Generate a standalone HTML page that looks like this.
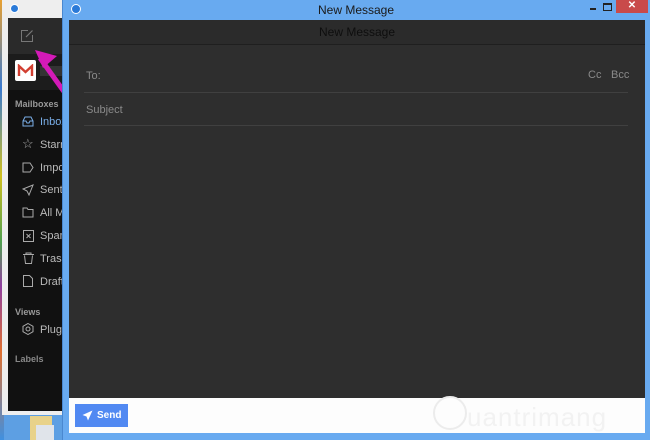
<!DOCTYPE html>
<html><head><meta charset="utf-8"><style>
*{margin:0;padding:0;box-sizing:border-box}
body{width:650px;height:440px;overflow:hidden;position:relative;background:#5d9fe3;font-family:"Liberation Sans",sans-serif}
.abs{position:absolute}
</style></head><body>
<div class="abs" style="left:0;top:0;width:4px;height:440px;background:linear-gradient(#e8a030 0,#3a7ad0 20%,#d0c020 40%,#50a050 55%,#9040a0 65%,#e07030 80%,#4090e0 100%)"></div>
<div class="abs" style="left:2px;top:0;width:64px;height:415px;background:#eeeeee"></div>
<div class="abs" style="left:10px;top:4px;width:9px;height:9px;border-radius:50%;background:#2a7ad8;border:1px solid #fff"></div>
<div class="abs" style="left:8px;top:18px;width:56px;height:393px;background:#111"></div>
<div class="abs" style="left:8px;top:18px;width:56px;height:36px;background:#2a2a2a"></div>
<svg class="abs" style="left:20px;top:29px" width="14" height="14" viewBox="0 0 14 14"><path d="M8 1.5H1.5v11h11V6" fill="none" stroke="#777" stroke-width="1"/><path d="M6 8l6.5-6.5" stroke="#777" stroke-width="1.2"/></svg>
<div class="abs" style="left:8px;top:54px;width:56px;height:36px;background:#1c1c1c"></div>
<div class="abs" style="left:15px;top:60px;width:21px;height:21px;background:#fff;border-radius:2px"></div>
<svg class="abs" style="left:17px;top:64px" width="17" height="13" viewBox="0 0 17 13"><path d="M2 12V2l6.5 6L15 2v10" fill="none" stroke="#d23f31" stroke-width="2.4"/></svg>
<div class="abs" style="left:40px;top:66px;width:24px;height:10px;background:#333"></div>
<div class="abs" style="left:15px;top:99px;font-size:9px;font-weight:bold;color:#999">Mailboxes</div>
<div class="abs" style="left:40px;top:116px;font-size:11px;color:#7aaee8">Inbox</div>
<svg class="abs" style="left:22px;top:116px" width="12" height="11"><path d="M1 5l2-4h6l2 4v5H1z M1 5h3l1 2h2l1-2h3" fill="none" stroke="#7aaee8"/></svg>
<div class="abs" style="left:40px;top:139px;font-size:11px;color:#bbb">Starr</div>
<div class="abs" style="left:22px;top:136px;font-size:13px;color:#aaa">☆</div>
<div class="abs" style="left:40px;top:162px;font-size:11px;color:#bbb">Impo</div>
<svg class="abs" style="left:22px;top:162px" width="12" height="11"><path d="M1 1h7l3 4.5L8 10H1z" fill="none" stroke="#aaa"/></svg>
<div class="abs" style="left:40px;top:184px;font-size:11px;color:#bbb">Sent</div>
<svg class="abs" style="left:22px;top:184px" width="12" height="12"><path d="M11 1L1 5l4 2 2 4z" fill="none" stroke="#aaa"/></svg>
<div class="abs" style="left:40px;top:207px;font-size:11px;color:#bbb">All M</div>
<svg class="abs" style="left:22px;top:207px" width="12" height="11"><path d="M1 1h4l1 1.5h5V10H1z" fill="none" stroke="#aaa"/></svg>
<div class="abs" style="left:40px;top:230px;font-size:11px;color:#bbb">Spam</div>
<svg class="abs" style="left:23px;top:230px" width="11" height="12"><rect x="0.5" y="0.5" width="10" height="11" fill="none" stroke="#aaa"/><path d="M3.5 4l4 4M7.5 4l-4 4" stroke="#aaa"/></svg>
<div class="abs" style="left:40px;top:253px;font-size:11px;color:#bbb">Trasl</div>
<svg class="abs" style="left:23px;top:252px" width="11" height="12"><path d="M0 2.5h11M3 2.5V1h5v1.5M1.5 3.5l1 8h6l1-8" fill="none" stroke="#aaa"/></svg>
<div class="abs" style="left:40px;top:276px;font-size:11px;color:#bbb">Draft</div>
<svg class="abs" style="left:23px;top:275px" width="10" height="12"><path d="M0.5 0.5h6l3 3v8h-9z" fill="none" stroke="#aaa"/></svg>
<div class="abs" style="left:15px;top:307px;font-size:9px;font-weight:bold;color:#999">Views</div>
<div class="abs" style="left:40px;top:324px;font-size:11px;color:#bbb">Plugi</div>
<svg class="abs" style="left:22px;top:323px" width="12" height="12"><path d="M6 .5l5 2.8v5.4L6 11.5 1 8.7V3.3z" fill="none" stroke="#aaa"/><circle cx="6" cy="6" r="2" fill="none" stroke="#aaa"/></svg>
<div class="abs" style="left:15px;top:354px;font-size:9px;font-weight:bold;color:#888">Labels</div>
<div class="abs" style="left:30px;top:416px;width:22px;height:24px;background:#e8d28a"></div>
<div class="abs" style="left:36px;top:425px;width:18px;height:15px;background:#e0e4ea"></div>
<svg class="abs" style="left:30px;top:40px" width="50" height="65"><path d="M40 60L10 18" stroke="#d41ab8" stroke-width="5"/><path d="M5 10l22 6-14 12z" fill="#d41ab8"/></svg>
<div class="abs" style="left:62px;top:0;width:588px;height:440px;background:#68aaf0;border-left:1px solid #4a88d0"></div>
<div class="abs" style="left:71px;top:4px;width:10px;height:10px;border-radius:50%;background:#2a7ad8;border:1px solid #fff"></div>
<div class="abs" style="left:62px;top:3px;width:588px;text-align:center;font-size:12px;color:#1a1a1a">New Message</div>
<div class="abs" style="left:590px;top:8px;width:6px;height:2px;background:#222"></div>
<div class="abs" style="left:603px;top:3px;width:9px;height:8px;border:1px solid #222;border-top-width:2px"></div>
<div class="abs" style="left:616px;top:0;width:32px;height:13px;background:#c94a4a;color:#fff;font-size:10px;text-align:center;line-height:12px;font-weight:bold">✕</div>
<div class="abs" style="left:69px;top:20px;width:576px;height:378px;background:#2e2e2e"></div>
<div class="abs" style="left:69px;top:20px;width:576px;height:25px;background:#2b2b2b;border-bottom:1px solid #1f1f1f;text-align:center;font-size:12px;line-height:25px;color:#0e0e0e">New Message</div>
<div class="abs" style="left:86px;top:70px;font-size:11px;color:#8a8a8a">To:</div>
<div class="abs" style="left:588px;top:69px;font-size:11px;color:#8a8a8a">Cc</div>
<div class="abs" style="left:611px;top:69px;font-size:11px;color:#8a8a8a">Bcc</div>
<div class="abs" style="left:84px;top:92px;width:544px;height:1px;background:#404040"></div>
<div class="abs" style="left:86px;top:104px;font-size:11px;color:#8a8a8a">Subject</div>
<div class="abs" style="left:84px;top:125px;width:544px;height:1px;background:#404040"></div>
<div class="abs" style="left:69px;top:398px;width:576px;height:35px;background:#fdfdfd"></div>
<div class="abs" style="left:75px;top:404px;width:53px;height:23px;background:#5189f2;color:#fff;font-size:10px;font-weight:bold;line-height:23px;padding-left:22px">Send</div>
<svg class="abs" style="left:82px;top:410px" width="11" height="11"><path d="M10.5.5L.5 5l4 1.5L6 10.5z" fill="#fff"/></svg>
<div class="abs" style="left:433px;top:396px;width:34px;height:34px;border-radius:50%;border:2px solid #ececec"></div>
<div class="abs" style="left:467px;top:402px;font-size:26px;color:#f2f2f2;letter-spacing:1px">uantrimang</div>
</body></html>
